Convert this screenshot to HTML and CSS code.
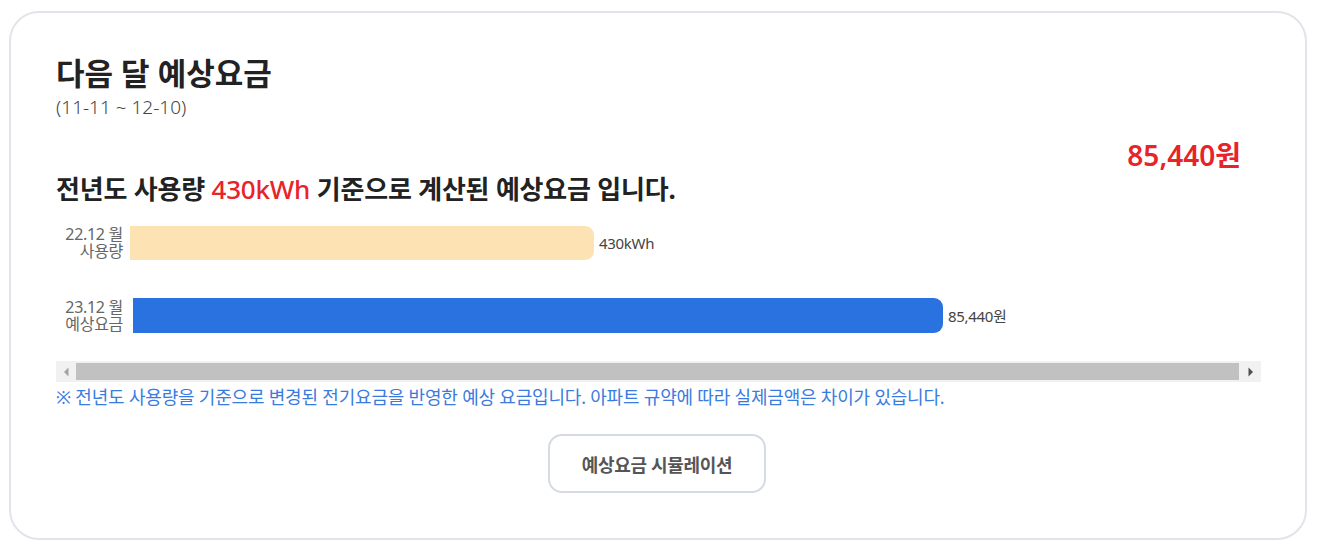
FILE: index.html
```html
<!DOCTYPE html>
<html lang="ko">
<head>
<meta charset="utf-8">
<title>다음 달 예상요금</title>
<link rel="stylesheet" href="styles.css">
</head>
<body>
<section class="card">
  <h2 class="title">다음 달 예상요금</h2>
  <p class="period">(11-11 ~ 12-10)</p>
  <div class="total">85,440원</div>
  <h3 class="basis">전년도 사용량 <span class="hl">430kWh</span> 기준으로 계산된 예상요금 입니다.</h3>
  <div class="chart-wrap">
    <div class="chart">
      <div class="row">
        <div class="label"><span class="ln">22.12 월</span><span class="ln">사용량</span></div>
        <div class="bar bar-prev" style="width:464px"></div>
        <span class="value">430kWh</span>
      </div>
      <div class="row row-next">
        <div class="label"><span class="ln">23.12 월</span><span class="ln">예상요금</span></div>
        <div class="bar bar-next" style="width:810px"></div>
        <span class="value">85,440원</span>
      </div>
    </div>
    <div class="scrollbar" aria-hidden="true">
      <span class="sb-btn">
        <svg width="6" height="10" viewBox="0 0 6 10"><path d="M5.5 0.5 L1 5 L5.5 9.5 Z" fill="#a3a3a3"/></svg>
      </span>
      <span class="sb-thumb"></span>
      <span class="sb-btn">
        <svg width="6" height="10" viewBox="0 0 6 10"><path d="M0.5 0.5 L5 5 L0.5 9.5 Z" fill="#505050"/></svg>
      </span>
    </div>
  </div>
  <p class="note">※ 전년도 사용량을 기준으로 변경된 전기요금을 반영한 예상 요금입니다. 아파트 규약에 따라 실제금액은 차이가 있습니다.</p>
  <div class="actions">
    <button class="btn" type="button">예상요금 시뮬레이션</button>
  </div>
</section>
</body>
</html>
```

FILE: styles.css
```css
html, body {
  margin: 0;
  padding: 0;
  background: #ffffff;
}
body {
  font-family: "Noto Sans", "Noto Sans CJK KR", sans-serif;
  color: #222;
}
.card {
  box-sizing: border-box;
  width: 1298px;
  height: 529px;
  margin: 11px 0 0 9px;
  border: 2px solid #e1e4ea;
  border-radius: 30px;
  padding: 40px 44px 0 45px;
}
.title {
  margin: 0;
  font-size: 31px;
  font-weight: 700;
  line-height: 40px;
  color: #222;
}
.period {
  margin: 1px 0 0;
  font-size: 19px;
  font-weight: 300;
  line-height: 26px;
  color: #444;
}
.total {
  margin-top: 18px;
  padding-right: 20px;
  text-align: right;
  font-size: 28px;
  font-weight: 600;
  line-height: 34px;
  color: #e8232a;
}
.basis {
  margin: 0;
  font-size: 26px;
  font-weight: 700;
  line-height: 34px;
  color: #222;
  letter-spacing: -0.2px;
}
.hl {
  color: #e8232a;
  font-weight: 500;
}
.chart-wrap {
  margin-top: 13px;
}
.chart {
  padding: 6px 0 28px;
}
.row {
  display: flex;
  align-items: center;
  height: 35px;
}
.row-next {
  margin-top: 38px;
}
.label {
  width: 67px;
  flex: none;
  display: flex;
  flex-direction: column;
  align-items: flex-end;
  font-size: 16px;
  line-height: 17px;
  color: #666;
  letter-spacing: -0.3px;
  white-space: nowrap;
}
.ln {
  display: block;
}
.bar {
  flex: none;
  height: 34px;
  margin-left: 7px;
  border-radius: 0 9px 9px 0;
}
.bar-prev {
  background: #fde3b3;
}
.bar-next {
  height: 35px;
  margin-left: 10px;
  background: #2a72e0;
}
.value {
  margin-left: 5px;
  font-size: 15px;
  color: #444;
  letter-spacing: -0.3px;
}
.scrollbar {
  display: flex;
  height: 21px;
  background: #f1f1f1;
}
.sb-btn {
  flex: none;
  width: 20px;
  display: flex;
  align-items: center;
  justify-content: center;
}
.sb-thumb {
  flex: 1;
  margin: 2px 2px 2px 0;
  background: #c1c1c1;
}
.note {
  margin: 3px 0 0;
  font-size: 18px;
  line-height: 24px;
  color: #3a7be0;
  letter-spacing: -0.2px;
}
.actions {
  display: flex;
  justify-content: center;
  margin-top: 25px;
}
.btn {
  box-sizing: border-box;
  width: 218px;
  height: 59px;
  margin-right: 3px;
  border: 2px solid #d6dae3;
  border-radius: 14px;
  background: #fff;
  font-family: "Noto Sans", "Noto Sans CJK KR", sans-serif;
  font-size: 18px;
  font-weight: 700;
  color: #555;
  letter-spacing: -0.3px;
  cursor: pointer;
}
```
